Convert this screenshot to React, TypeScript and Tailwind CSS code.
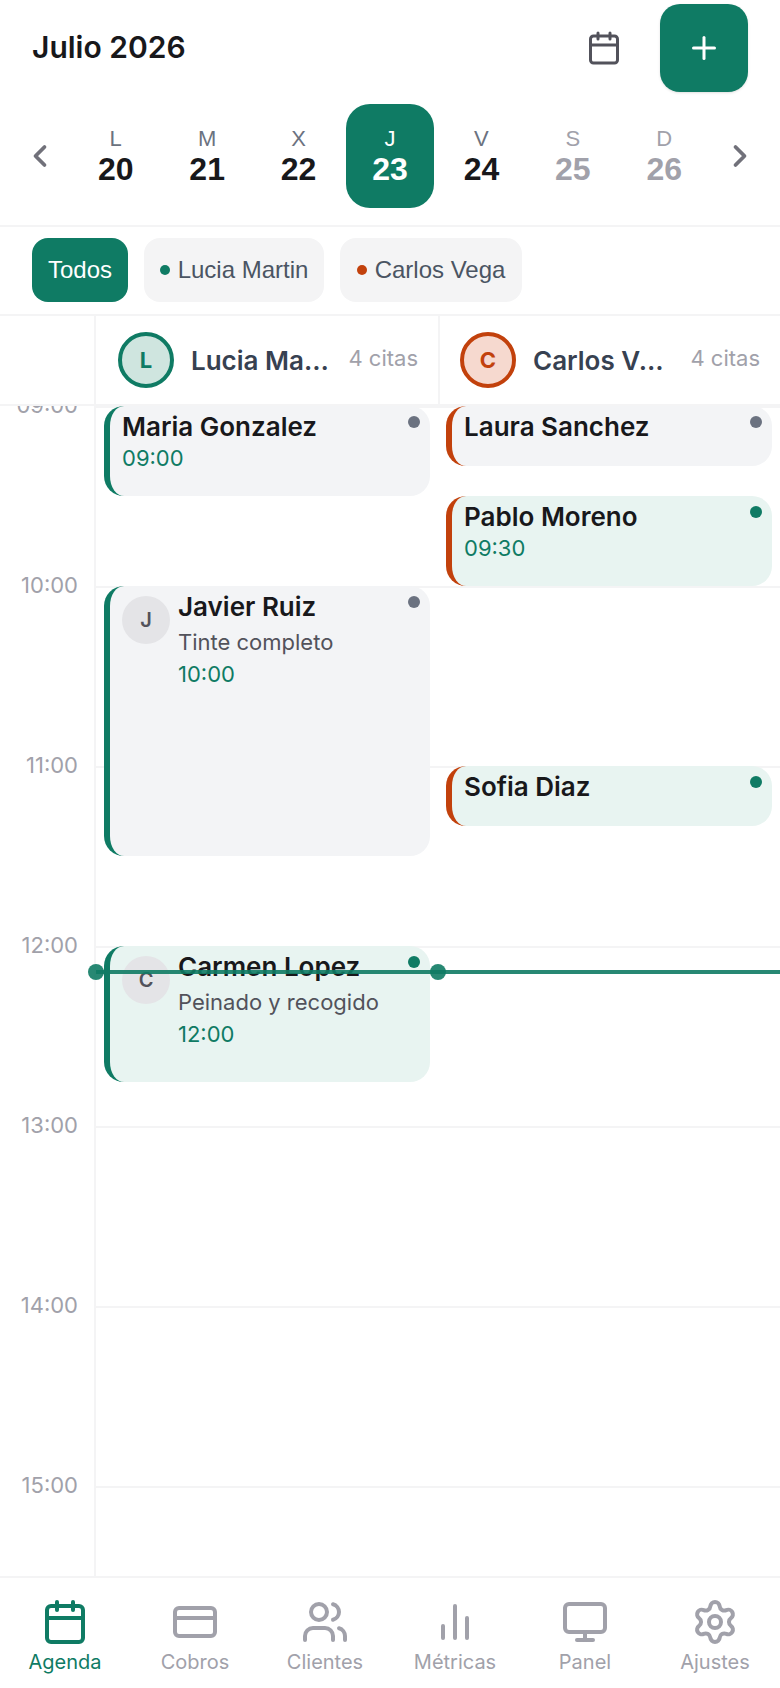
import { Calendar, ChevronLeft, ChevronRight, CreditCard, Monitor, Plus, Settings, Users } from 'lucide-react'

const days = [
  { letter: 'L', num: 20 },
  { letter: 'M', num: 21 },
  { letter: 'X', num: 22 },
  { letter: 'J', num: 23, active: true },
  { letter: 'V', num: 24 },
  { letter: 'S', num: 25, off: true },
  { letter: 'D', num: 26, off: true },
]

const hours = ['09:00', '10:00', '11:00', '12:00', '13:00', '14:00', '15:00']

function BarsIcon({ className }: { className?: string }) {
  return (
    <svg width="48" height="48" viewBox="0 0 24 24" fill="none" stroke="currentColor" strokeWidth="2" strokeLinecap="round" strokeLinejoin="round" className={className}>
      <path d="M18 20V10" />
      <path d="M12 20V4" />
      <path d="M6 20v-6" />
    </svg>
  )
}

const nav = [
  { label: 'Agenda', icon: Calendar, active: true },
  { label: 'Cobros', icon: CreditCard },
  { label: 'Clientes', icon: Users },
  { label: 'Métricas', icon: BarsIcon },
  { label: 'Panel', icon: Monitor },
  { label: 'Ajustes', icon: Settings },
]

interface EventCardProps {
  name: string
  time?: string
  service?: string
  initial?: string
  confirmed?: boolean
  accent: 'green' | 'orange'
  className: string
}

function EventCard({ name, time, service, initial, confirmed, accent, className }: EventCardProps) {
  return (
    <div
      className={`absolute left-2 w-[326px] rounded-[20px] border-l-[6px] pl-3 pt-[6px] ${
        accent === 'green' ? 'border-[#0f7b64]' : 'border-[#c2410c]'
      } ${confirmed ? 'bg-[#e8f4f1]' : 'bg-[#f3f4f6]'} ${className}`}
    >
      <span
        className={`absolute right-[10px] top-[10px] h-3 w-3 rounded-full ${confirmed ? 'bg-[#0f7b64]' : 'bg-[#6b7280]'}`}
      />
      <div className="flex gap-2">
        {initial && (
          <div className="mt-1 flex h-12 w-12 shrink-0 items-center justify-center rounded-full bg-[#e4e4e7] text-[20px] font-semibold text-[#52525b]">
            {initial}
          </div>
        )}
        <div>
          <div className="text-[26px] font-semibold leading-[30px] text-[#18181b]">{name}</div>
          {service && <div className="mt-[5px] text-[22px] leading-[30px] text-[#52525b]">{service}</div>}
          {time && <div className={`${service ? 'mt-[2px]' : 'mt-px'} text-[22px] leading-[30px] text-[#0f7b64]`}>{time}</div>}
        </div>
      </div>
    </div>
  )
}

export default function App() {
  return (
    <div className="flex h-[1688px] w-[780px] flex-col overflow-hidden bg-white font-['Inter',sans-serif] text-[#18181b]">
      {/* Top bar */}
      <div className="flex items-center justify-between pl-8 pr-8 pt-1">
        <h1 className="-translate-y-px text-[30px] font-semibold">Julio 2026</h1>
        <div className="flex items-center gap-[38px]">
          <Calendar size={36} className="text-[#52525b]" />
          <button type="button" className="flex h-[88px] w-[88px] items-center justify-center rounded-[20px] bg-[#0f7b64] text-white shadow-sm">
            <Plus size={36} />
          </button>
        </div>
      </div>

      {/* Week strip */}
      <div className="flex items-center gap-3 border-b-2 border-[#f4f4f5] px-[22px] pb-[17px] pt-3 font-['Liberation_Sans',sans-serif]">
        <ChevronLeft size={36} strokeWidth={2.5} className="shrink-0 text-[#71717a]" />
        <div className="grid flex-1 grid-cols-7">
          {days.map((d) => (
            <div
              key={d.num}
              className={`mx-auto flex h-[104px] w-[88px] flex-col items-center justify-center rounded-[24px] pb-1 ${
                d.active ? 'bg-[#0f7b64] text-white' : d.off ? 'text-[#a1a1aa]' : 'text-[#18181b]'
              }`}
            >
              <span className={`text-[22px] leading-[30px] ${d.active ? 'text-white' : d.off ? 'text-[#a1a1aa]' : 'text-[#6b7280]'}`}>
                {d.letter}
              </span>
              <span className="text-[32px] font-bold leading-[30px]">{d.num}</span>
            </div>
          ))}
        </div>
        <ChevronRight size={36} strokeWidth={2.5} className="shrink-0 text-[#71717a]" />
      </div>

      {/* Staff filter */}
      <div className="flex gap-4 border-b-2 border-[#f4f4f5] px-8 pb-3 pt-[11px] font-['Liberation_Sans',sans-serif] text-[24px]">
        <div className="flex h-16 w-24 items-center justify-center rounded-2xl bg-[#0f7b64] text-white">Todos</div>
        <div className="flex h-16 w-[180px] items-center justify-center gap-2 rounded-2xl bg-[#f4f4f5] text-[#4b5563]">
          <span className="h-[10px] w-[10px] rounded-full bg-[#0f7b64]" />
          Lucia Martin
        </div>
        <div className="flex h-16 w-[182px] items-center justify-center gap-2 rounded-2xl bg-[#f4f4f5] text-[#4b5563]">
          <span className="h-[10px] w-[10px] rounded-full bg-[#c2410c]" />
          Carlos Vega
        </div>
      </div>

      {/* Column headers */}
      <div className="flex h-[90px] shrink-0 border-b-2 border-[#f4f4f5]">
        <div className="w-[96px] shrink-0 border-r-2 border-[#f4f4f5]" />
        <div className="flex w-[344px] shrink-0 items-center border-r-2 border-[#f4f4f5] pl-[22px] pr-5">
          <div className="flex h-14 w-14 shrink-0 items-center justify-center rounded-full border-4 border-[#0f7b64] bg-[#cfe5df] text-[22px] font-bold text-[#0f7b64]">
            L
          </div>
          <span className="ml-[17px] w-[140px] truncate text-[26px] font-semibold text-[#374151]">Lucia Martin</span>
          <span className="ml-auto -translate-y-[2px] text-[22px] text-[#a1a1aa]">4 citas</span>
        </div>
        <div className="flex flex-1 items-center pl-5 pr-5">
          <div className="flex h-14 w-14 shrink-0 items-center justify-center rounded-full border-4 border-[#c2410c] bg-[#f6d9cf] text-[22px] font-bold text-[#c2410c]">
            C
          </div>
          <span className="ml-[17px] w-[134px] truncate text-[26px] font-semibold text-[#374151]">Carlos Vega</span>
          <span className="ml-auto -translate-y-[2px] text-[22px] text-[#a1a1aa]">4 citas</span>
        </div>
      </div>

      {/* Time grid */}
      <div className="relative min-h-0 flex-1 overflow-hidden">
        <div className="flex">
          <div className="w-[96px] shrink-0 border-r-2 border-[#f4f4f5]">
            {hours.map((h) => (
              <div key={h} className="relative h-[180px]">
                <span className="absolute -top-[15px] right-4 text-[22px] leading-7 text-[#a1a1aa]">{h}</span>
              </div>
            ))}
          </div>
          <div className="relative flex-1">
            {hours.map((h) => (
              <div key={h} className="h-[180px] border-t-2 border-[#f4f4f5]" />
            ))}
            <div className="absolute inset-y-0 left-0 w-[342px]">
              <EventCard name="Maria Gonzalez" time="09:00" accent="green" className="top-0 h-[90px]" />
              <EventCard
                name="Javier Ruiz"
                service="Tinte completo"
                time="10:00"
                initial="J"
                accent="green"
                className="top-[180px] h-[270px]"
              />
              <EventCard
                name="Carmen Lopez"
                service="Peinado y recogido"
                time="12:00"
                initial="C"
                accent="green"
                confirmed
                className="top-[540px] h-[136px]"
              />
            </div>
            <div className="absolute inset-y-0 left-[342px] w-[342px]">
              <EventCard name="Laura Sanchez" accent="orange" className="top-0 h-[60px]" />
              <EventCard name="Pablo Moreno" time="09:30" accent="orange" confirmed className="top-[90px] h-[90px]" />
              <EventCard name="Sofia Diaz" accent="orange" confirmed className="top-[360px] h-[60px]" />
            </div>
          </div>
        </div>

        {/* Now indicator */}
        <div className="absolute left-[96px] right-0 top-[564px] h-1 bg-[#0f7b64] opacity-90" />
        <span className="absolute left-[88px] top-[558px] h-4 w-4 rounded-full bg-[#0f7b64] opacity-90" />
        <span className="absolute left-[430px] top-[558px] h-4 w-4 rounded-full bg-[#0f7b64] opacity-90" />
      </div>

      {/* Bottom nav */}
      <nav className="grid h-[112px] shrink-0 grid-cols-6 border-t-2 border-[#f4f4f5] pt-[20px]">
        {nav.map((item) => {
          const Icon = item.icon
          return (
            <div key={item.label} className={`flex flex-col items-center ${item.active ? 'text-[#0f7b64]' : 'text-[#a1a1aa]'}`}>
              <Icon size={48} className="h-12 w-12" />
              <span className="mt-[2px] text-[20px] leading-7">{item.label}</span>
            </div>
          )
        })}
      </nav>
    </div>
  )
}
